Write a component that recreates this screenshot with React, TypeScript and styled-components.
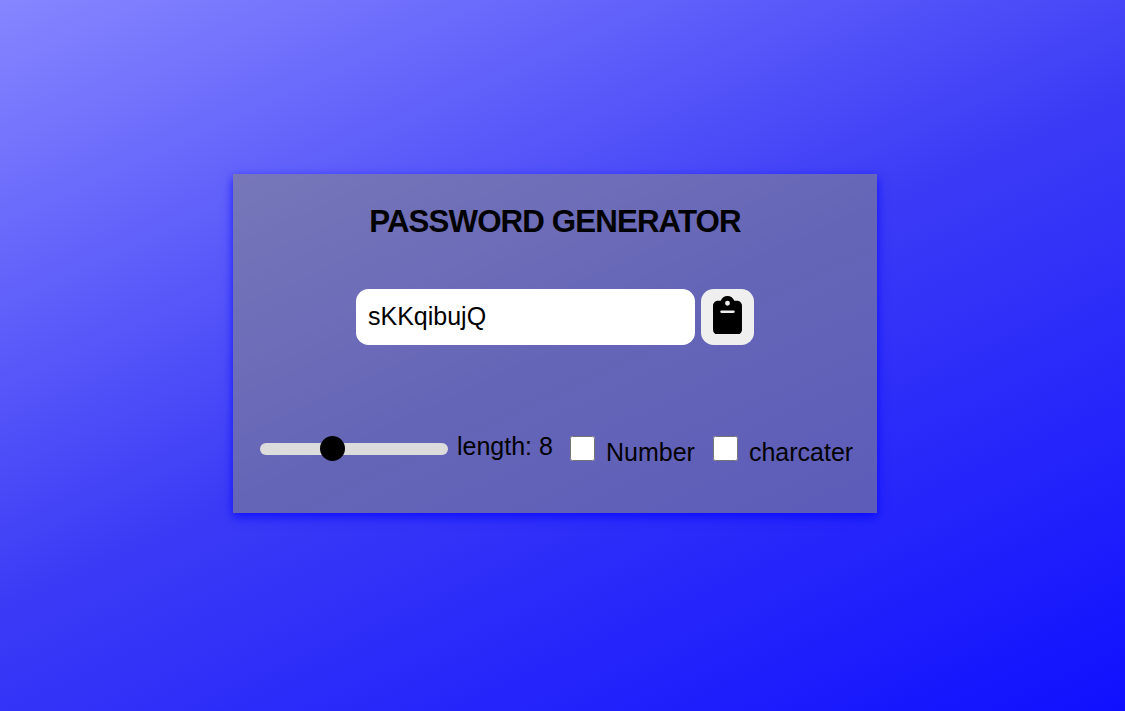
import React, { useState } from "react";
import styled, { createGlobalStyle } from "styled-components";

const GlobalStyle = createGlobalStyle`
  * { box-sizing: border-box; margin: 0; padding: 0; }
  body { font-family: "Liberation Sans", Arial, sans-serif; font-size: 25px; color: #000; overflow: hidden; }
`;

const Page = styled.div`
  height: 100vh;
  padding: 174px 15px 0 0;
  display: flex;
  justify-content: center;
  align-items: flex-start;
  background: linear-gradient(155.5deg, #8686ff 0%, #3b3bf6 49.5%, #1010ff 100%);
`;

const Card = styled.main`
  width: 644px;
  height: 339px;
  padding-top: 30px;
  display: flex;
  flex-direction: column;
  background: rgba(132, 132, 137, 0.58);
  box-shadow: 0 4px 10px rgba(0, 0, 255, 0.75);
`;

const Title = styled.h1`
  font-size: 31.25px;
  line-height: 36px;
  letter-spacing: -0.87px;
  font-weight: 700;
  text-align: center;
`;

const PasswordRow = styled.div`
  display: flex;
  justify-content: center;
  gap: 6px;
  margin-top: 49px;
`;

const PasswordField = styled.input`
  width: 339px;
  height: 56px;
  padding: 0 12px 2px;
  border: none;
  border-radius: 12.5px;
  background: #fff;
  color: #000;
  font: inherit;
  outline: none;
`;

const CopyButton = styled.button`
  width: 53px;
  height: 56px;
  padding: 0 0 4px;
  border: none;
  border-radius: 12.5px;
  background: #efefef;
  display: flex;
  align-items: center;
  justify-content: center;
`;

const ClipboardIcon = styled.svg`
  width: 29px;
  height: 38.6px;
  display: block;
`;

const Options = styled.div`
  display: flex;
  align-items: flex-start;
  margin-top: 88px;
  padding-left: 27px;
`;

const Slider = styled.input`
  appearance: none;
  width: 188px;
  height: 12px;
  margin-top: 10px;
  border-radius: 6px;
  background: #dcdcdc;
  outline: none;

  &::-webkit-slider-thumb {
    appearance: none;
    width: 25px;
    height: 25px;
    margin-top: -1px;
    border-radius: 50%;
    background: #000;
  }
`;

const LengthLabel = styled.span`
  width: 96px;
  margin: 0 17px 0 9px;
  line-height: 26px;
  white-space: nowrap;
`;

const Option = styled.label<{ $gap: number }>`
  display: flex;
  align-items: flex-start;
  margin-right: ${(p) => p.$gap}px;
`;

const Checkbox = styled.input`
  width: 25px;
  height: 25px;
  margin: 3px 11px 0 0;
`;

const OptionText = styled.span`
  margin-top: 6px;
  line-height: 26px;
`;

export default function App() {
  const [length, setLength] = useState(8);
  const [number, setNumber] = useState(false);
  const [character, setCharacter] = useState(false);
  return (
    <>
      <GlobalStyle />
      <Page>
        <Card>
          <Title>PASSWORD GENERATOR</Title>
          <PasswordRow>
            <PasswordField type="text" readOnly value="sKKqibujQ" />
            <CopyButton aria-label="Copy password">
              <ClipboardIcon viewBox="0 0 384 512">
                <path d="M192 0c-41.800 0-77.400 26.700-90.500 64H64C28.700 64 0 92.700 0 128v320c0 35.300 28.700 64 64 64h256c35.300 0 64-28.700 64-64V128c0-35.300-28.700-64-64-64h-37.500C269.400 26.700 233.800 0 192 0zm0 64a32 32 0 1 1 0 64 32 32 0 1 1 0-64zM112 192h160c8.800 0 16 7.200 16 16s-7.200 16-16 16H112c-8.800 0-16-7.200-16-16s7.200-16 16-16z" />
              </ClipboardIcon>
            </CopyButton>
          </PasswordRow>
          <Options>
            <Slider
              type="range"
              min={1}
              max={20}
              value={length}
              onChange={(e) => setLength(Number(e.target.value))}
            />
            <LengthLabel>length: {length}</LengthLabel>
            <Option $gap={18}>
              <Checkbox type="checkbox" checked={number} onChange={() => setNumber(!number)} />
              <OptionText>Number</OptionText>
            </Option>
            <Option $gap={0}>
              <Checkbox type="checkbox" checked={character} onChange={() => setCharacter(!character)} />
              <OptionText>charcater</OptionText>
            </Option>
          </Options>
        </Card>
      </Page>
    </>
  );
}
